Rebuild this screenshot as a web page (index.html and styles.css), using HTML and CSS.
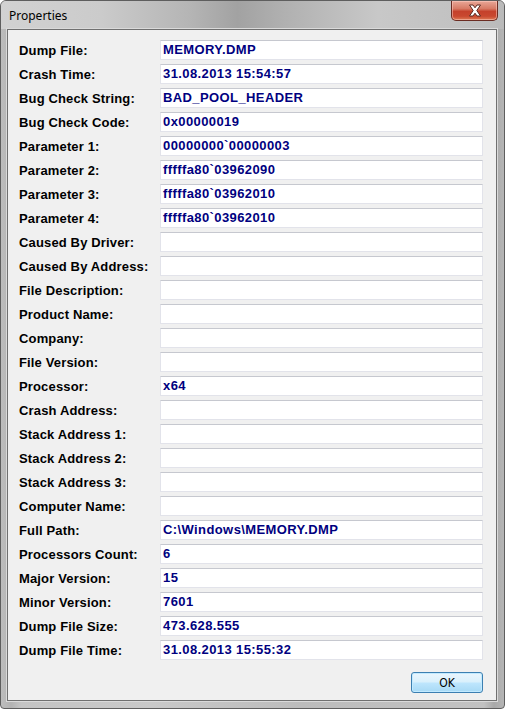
FILE: index.html
```html
<!DOCTYPE html>
<html>
<head>
<meta charset="utf-8">
<link rel="stylesheet" href="styles.css">
</head>
<body>
<div class="window">
  <div class="titlebar">
    <span class="title">Properties</span>
    <div class="close">
      <svg width="20" height="13" viewBox="0 0 20 13">
        <path d="M4.5 1 L8 1 L10 3.8 L12 1 L15.5 1 L11.8 6.5 L15.5 12 L12 12 L10 9.2 L8 12 L4.5 12 L8.2 6.5 Z" fill="#ffffff" stroke="#5a2a22" stroke-width="1" stroke-linejoin="round"/>
      </svg>
    </div>
  </div>
  <div class="client">
    <div class="grid">
      <div class="lbl">Dump File:</div><div class="fld">MEMORY.DMP</div>
      <div class="lbl">Crash Time:</div><div class="fld">31.08.2013 15:54:57</div>
      <div class="lbl">Bug Check String:</div><div class="fld">BAD_POOL_HEADER</div>
      <div class="lbl">Bug Check Code:</div><div class="fld">0x00000019</div>
      <div class="lbl">Parameter 1:</div><div class="fld">00000000`00000003</div>
      <div class="lbl">Parameter 2:</div><div class="fld">fffffa80`03962090</div>
      <div class="lbl">Parameter 3:</div><div class="fld">fffffa80`03962010</div>
      <div class="lbl">Parameter 4:</div><div class="fld">fffffa80`03962010</div>
      <div class="lbl">Caused By Driver:</div><div class="fld"></div>
      <div class="lbl">Caused By Address:</div><div class="fld"></div>
      <div class="lbl">File Description:</div><div class="fld"></div>
      <div class="lbl">Product Name:</div><div class="fld"></div>
      <div class="lbl">Company:</div><div class="fld"></div>
      <div class="lbl">File Version:</div><div class="fld"></div>
      <div class="lbl">Processor:</div><div class="fld">x64</div>
      <div class="lbl">Crash Address:</div><div class="fld"></div>
      <div class="lbl">Stack Address 1:</div><div class="fld"></div>
      <div class="lbl">Stack Address 2:</div><div class="fld"></div>
      <div class="lbl">Stack Address 3:</div><div class="fld"></div>
      <div class="lbl">Computer Name:</div><div class="fld"></div>
      <div class="lbl">Full Path:</div><div class="fld">C:\Windows\MEMORY.DMP</div>
      <div class="lbl">Processors Count:</div><div class="fld">6</div>
      <div class="lbl">Major Version:</div><div class="fld">15</div>
      <div class="lbl">Minor Version:</div><div class="fld">7601</div>
      <div class="lbl">Dump File Size:</div><div class="fld">473.628.555</div>
      <div class="lbl">Dump File Time:</div><div class="fld">31.08.2013 15:55:32</div>
    </div>
    <div class="actions">
      <button class="ok">OK</button>
    </div>
  </div>
</div>
</body>
</html>
```
FILE: styles.css
```css
html, body {
  margin: 0;
  padding: 0;
  background: #ffffff;
  width: 505px;
  height: 711px;
  overflow: hidden;
}
.window {
  box-sizing: border-box;
  width: 505px;
  height: 709px;
  border: 1px solid #5e5e5e;
  border-radius: 6px 6px 4px 4px;
  background: linear-gradient(90deg, #bdbdbd 0%, #b3b3b3 2%, #c4c4c4 4%, #c9c9c9 30%, #bcbcbc 60%, #c2c2c2 96%, #a9a9a9 98%, #b5b5b5 100%);
  padding: 0 7px 7px 6px;
  display: flex;
  flex-direction: column;
}
.titlebar {
  height: 28px;
  margin: 0 -7px 0 -6px;
  padding: 0 7px 0 8px;
  display: flex;
  align-items: flex-start;
  justify-content: space-between;
  border-radius: 5px 5px 0 0;
  background: linear-gradient(90deg, #d2d2d2 0%, #cbcbcb 20%, #b4b4b4 38%, #a2a2a2 47%, #b0b0b0 56%, #c8c8c8 75%, #c2c2c2 90%, #bababa 100%);
}
.title {
  font-family: "Noto Sans", "Open Sans", sans-serif;
  font-size: 12px;
  color: #000;
  margin-top: 6px;
}
.close {
  width: 47px;
  height: 20px;
  margin-right: -1px;
  box-sizing: border-box;
  border: 1px solid #6b2c22;
  border-top: none;
  border-radius: 0 0 5px 5px;
  background: linear-gradient(180deg, #e9a797 0%, #d77b66 40%, #c5412b 55%, #c9482f 80%, #dd7a55 100%);
  box-shadow: inset 0 0 0 1px rgba(255, 210, 200, 0.5);
  display: flex;
  align-items: center;
  justify-content: center;
}
.close svg {
  display: block;
}
.client {
  flex: 1;
  box-sizing: border-box;
  background: #f0f0f0;
  border: 1px solid #707070;
  box-shadow: 0 0 0 1px #dadada;
  padding: 10px 13px 0 11px;
  display: flex;
  flex-direction: column;
}
.grid {
  display: grid;
  grid-template-columns: 141px 323px;
  grid-auto-rows: 20px;
  row-gap: 4px;
}
.lbl {
  font-family: "Liberation Sans", Arial, sans-serif;
  font-weight: bold;
  font-size: 13px;
  letter-spacing: 0.15px;
  color: #000;
  line-height: 20px;
  padding-top: 1px;
}
.fld {
  box-sizing: border-box;
  background: #ffffff;
  border: 1px solid #e2e3ea;
  border-top-color: #c6c8cf;
  font-family: "Liberation Sans", Arial, sans-serif;
  font-weight: bold;
  font-size: 13px;
  letter-spacing: 0.4px;
  color: #000080;
  line-height: 18px;
  padding-left: 2px;
  white-space: nowrap;
}
.actions {
  display: flex;
  justify-content: flex-end;
  margin-top: 12px;
}
.ok {
  width: 72px;
  height: 21px;
  box-sizing: border-box;
  border: 1px solid #3c7fb1;
  border-radius: 3px;
  background: linear-gradient(180deg, #eaf6fd 0%, #d9f0fc 48%, #bee6fd 52%, #a7d9f5 100%);
  box-shadow: inset 0 0 0 1px #c2eaff;
  font-family: "DejaVu Sans Condensed", "DejaVu Sans", sans-serif;
  font-size: 12px;
  color: #000;
  padding: 0;
}
```
